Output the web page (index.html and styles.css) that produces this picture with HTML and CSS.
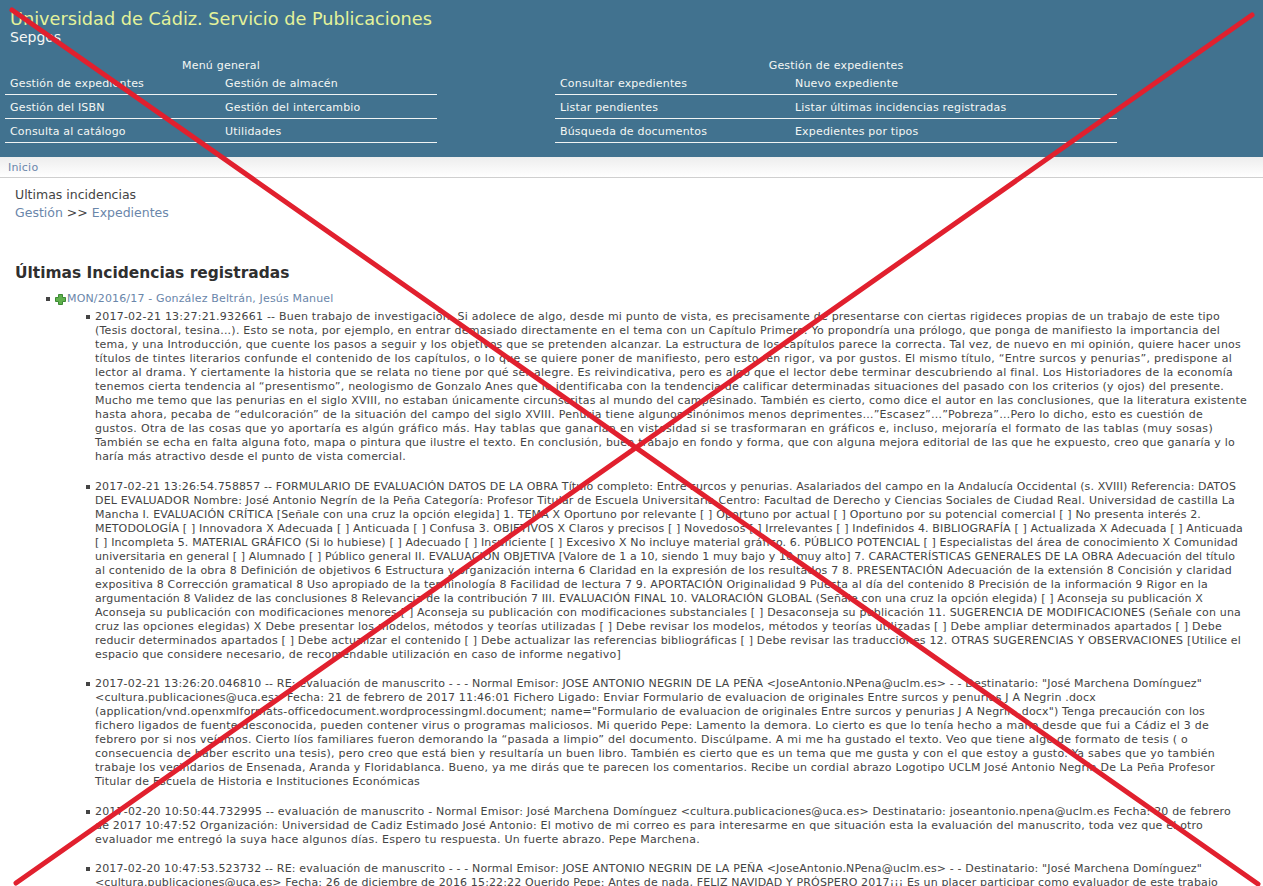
FILE: index.html
```html
<!DOCTYPE html>
<html lang="es">
<head>
<meta charset="utf-8">
<title>Sepgos</title>
<link rel="stylesheet" href="styles.css">
</head>
<body>
<header class="top">
  <div class="brand">
    <div class="brand-title">Universidad de Cádiz. Servicio de Publicaciones</div>
    <div class="brand-sub">Sepgos</div>
  </div>
  <nav class="menus">
    <section class="menu menu-general">
      <div class="menu-title">Menú general</div>
      <div class="menu-grid">
        <a>Gestión de expedientes</a><a>Gestión de almacén</a>
        <a>Gestión del ISBN</a><a>Gestión del intercambio</a>
        <a>Consulta al catálogo</a><a>Utilidades</a>
      </div>
    </section>
    <section class="menu menu-exp">
      <div class="menu-title">Gestión de expedientes</div>
      <div class="menu-grid">
        <a>Consultar expedientes</a><a>Nuevo expediente</a>
        <a>Listar pendientes</a><a>Listar últimas incidencias registradas</a>
        <a>Búsqueda de documentos</a><a>Expedientes por tipos</a>
      </div>
    </section>
  </nav>
</header>
<div class="crumb"><a class="link">Inicio</a></div>
<main class="content">
  <div class="page-name">Ultimas incidencias</div>
  <div class="path"><a class="link">Gestión</a> &gt;&gt; <a class="link">Expedientes</a></div>
  <h2 class="heading">Últimas Incidencias registradas</h2>
  <ul class="files">
    <li>
      <div class="file-line">
        <svg class="plus" viewBox="0 0 11 11" width="11" height="11"><path d="M3.5.5h4v3h3v4h-3v3h-4v-3h-3v-4h3z" fill="#5fb04c" stroke="#3d8a35"/></svg><a class="link">MON/2016/17 - González Beltrán, Jesús Manuel</a>
      </div>
      <ul class="events">
        <li>
          <span class="ln" data-end="1220">2017-02-21 13:27:21.932661 -- Buen trabajo de investigación. Si adolece de algo, desde mi punto de vista, es precisamente de presentarse con ciertas rigideces propias de un trabajo de este tipo</span>
          <span class="ln" data-end="1220">(Tesis doctoral, tesina...). Esto se nota, por ejemplo, en entrar demasiado directamente en el tema con un Capítulo Primero. Yo propondría una prólogo, que ponga de manifiesto la importancia del</span>
          <span class="ln" data-end="1241">tema, y una Introducción, que cuente los pasos a seguir y los objetivos que se pretenden alcanzar. La estructura de los capítulos parece la correcta. Tal vez, de nuevo en mi opinión, quiere hacer unos</span>
          <span class="ln" data-end="1232">títulos de tintes literarios confunde el contenido de los capítulos, o lo que se quiere poner de manifiesto, pero esto, en rigor, va por gustos. El mismo título, “Entre surcos y penurias”, predispone al</span>
          <span class="ln" data-end="1233">lector al drama. Y ciertamente la historia que se relata no tiene por qué ser alegre. Es reivindicativa, pero es algo que el lector debe terminar descubriendo al final. Los Historiadores de la economía</span>
          <span class="ln" data-end="1224">tenemos cierta tendencia al “presentismo”, neologismo de Gonzalo Anes que lo identificaba con la tendencia de calificar determinadas situaciones del pasado con los criterios (y ojos) del presente.</span>
          <span class="ln" data-end="1247">Mucho me temo que las penurias en el siglo XVIII, no estaban únicamente circunscritas al mundo del campesinado. También es cierto, como dice el autor en las conclusiones, que la literatura existente</span>
          <span class="ln" data-end="1203">hasta ahora, pecaba de “edulcoración” de la situación del campo del siglo XVIII. Penuria tiene algunos sinónimos menos deprimentes…”Escasez”…”Pobreza”…Pero lo dicho, esto es cuestión de</span>
          <span class="ln" data-end="1213">gustos. Otra de las cosas que yo aportaría es algún gráfico más. Hay tablas que ganarían en vistosidad si se trasformaran en gráficos e, incluso, mejoraría el formato de las tablas (muy sosas)</span>
          <span class="ln" data-end="1235">También se echa en falta alguna foto, mapa o pintura que ilustre el texto. En conclusión, buen trabajo en fondo y forma, que con alguna mejora editorial de las que he expuesto, creo que ganaría y lo</span>
          <span class="ln" data-end="406">haría más atractivo desde el punto de vista comercial.</span>
        </li>
        <li>
          <span class="ln" data-end="1236">2017-02-21 13:26:54.758857 -- FORMULARIO DE EVALUACIÓN DATOS DE LA OBRA Título completo: Entre surcos y penurias. Asalariados del campo en la Andalucía Occidental (s. XVIII) Referencia: DATOS</span>
          <span class="ln" data-end="1235">DEL EVALUADOR Nombre: José Antonio Negrín de la Peña Categoría: Profesor Titular de Escuela Universitaria Centro: Facultad de Derecho y Ciencias Sociales de Ciudad Real. Universidad de castilla La</span>
          <span class="ln" data-end="1201">Mancha I. EVALUACIÓN CRÍTICA [Señale con una cruz la opción elegida] 1. TEMA X Oportuno por relevante [ ] Oportuno por actual [ ] Oportuno por su potencial comercial [ ] No presenta interés 2.</span>
          <span class="ln" data-end="1243">METODOLOGÍA [ ] Innovadora X Adecuada [ ] Anticuada [ ] Confusa 3. OBJETIVOS X Claros y precisos [ ] Novedosos [ ] Irrelevantes [ ] Indefinidos 4. BIBLIOGRAFÍA [ ] Actualizada X Adecuada [ ] Anticuada</span>
          <span class="ln" data-end="1238">[ ] Incompleta 5. MATERIAL GRÁFICO (Si lo hubiese) [ ] Adecuado [ ] Insuficiente [ ] Excesivo X No incluye material gráfico. 6. PÚBLICO POTENCIAL [ ] Especialistas del área de conocimiento X Comunidad</span>
          <span class="ln" data-end="1235">universitaria en general [ ] Alumnado [ ] Público general II. EVALUACIÓN OBJETIVA [Valore de 1 a 10, siendo 1 muy bajo y 10 muy alto] 7. CARACTERÍSTICAS GENERALES DE LA OBRA Adecuación del título</span>
          <span class="ln" data-end="1232">al contenido de la obra 8 Definición de objetivos 6 Estructura y organización interna 6 Claridad en la expresión de los resultados 7 8. PRESENTACIÓN Adecuación de la extensión 8 Concisión y claridad</span>
          <span class="ln" data-end="1208">expositiva 8 Corrección gramatical 8 Uso apropiado de la terminología 8 Facilidad de lectura 7 9. APORTACIÓN Originalidad 9 Puesta al día del contenido 8 Precisión de la información 9 Rigor en la</span>
          <span class="ln" data-end="1203">argumentación 8 Validez de las conclusiones 8 Relevancia de la contribución 7 III. EVALUACIÓN FINAL 10. VALORACIÓN GLOBAL (Señale con una cruz la opción elegida) [ ] Aconseja su publicación X</span>
          <span class="ln" data-end="1241">Aconseja su publicación con modificaciones menores [ ] Aconseja su publicación con modificaciones substanciales [ ] Desaconseja su publicación 11. SUGERENCIA DE MODIFICACIONES (Señale con una</span>
          <span class="ln" data-end="1222">cruz las opciones elegidas) X Debe presentar los modelos, métodos y teorías utilizadas [ ] Debe revisar los modelos, métodos y teorías utilizadas [ ] Debe ampliar determinados apartados [ ] Debe</span>
          <span class="ln" data-end="1241">reducir determinados apartados [ ] Debe actualizar el contenido [ ] Debe actualizar las referencias bibliográficas [ ] Debe revisar las traducciones 12. OTRAS SUGERENCIAS Y OBSERVACIONES [Utilice el</span>
          <span class="ln" data-end="621">espacio que considere necesario, de recomendable utilización en caso de informe negativo]</span>
        </li>
        <li>
          <span class="ln" data-end="1202">2017-02-21 13:26:20.046810 -- RE: evaluación de manuscrito - - - Normal Emisor: JOSE ANTONIO NEGRIN DE LA PEÑA &lt;JoseAntonio.NPena@uclm.es&gt; - - Destinatario: "José Marchena Domínguez"</span>
          <span class="ln" data-end="1096">&lt;cultura.publicaciones@uca.es&gt; Fecha: 21 de febrero de 2017 11:46:01 Fichero Ligado: Enviar Formulario de evaluacion de originales Entre surcos y penurias J A Negrin .docx</span>
          <span class="ln" data-end="1205">(application/vnd.openxmlformats-officedocument.wordprocessingml.document; name="Formulario de evaluacion de originales Entre surcos y penurias J A Negrin .docx") Tenga precaución con los</span>
          <span class="ln" data-end="1209">fichero ligados de fuente desconocida, pueden contener virus o programas maliciosos. Mi querido Pepe: Lamento la demora. Lo cierto es que lo tenía hecho a mano desde que fui a Cádiz el 3 de</span>
          <span class="ln" data-end="1188">febrero por si nos veíamos. Cierto líos familiares fueron demorando la “pasada a limpio” del documento. Discúlpame. A mi me ha gustado el texto. Veo que tiene algo de formato de tesis ( o</span>
          <span class="ln" data-end="1215">consecuencia de haber escrito una tesis), pero creo que está bien y resultaría un buen libro. También es cierto que es un tema que me gusta y con el que estoy a gusto. Ya sabes que yo también</span>
          <span class="ln" data-end="1215">trabaje los vecindarios de Ensenada, Aranda y Floridablanca. Bueno, ya me dirás que te parecen los comentarios. Recibe un cordial abrazo Logotipo UCLM José Antonio Negrín De La Peña Profesor</span>
          <span class="ln" data-end="420">Titular de Escuela de Historia e Instituciones Económicas</span>
        </li>
        <li>
          <span class="ln" data-end="1231">2017-02-20 10:50:44.732995 -- evaluación de manuscrito - Normal Emisor: José Marchena Domínguez &lt;cultura.publicaciones@uca.es&gt; Destinatario: joseantonio.npena@uclm.es Fecha: 20 de febrero</span>
          <span class="ln" data-end="1203">de 2017 10:47:52 Organización: Universidad de Cadiz Estimado José Antonio: El motivo de mi correo es para interesarme en que situación esta la evaluación del manuscrito, toda vez que el otro</span>
          <span class="ln" data-end="700">evaluador me entregó la suya hace algunos días. Espero tu respuesta. Un fuerte abrazo. Pepe Marchena.</span>
        </li>
        <li>
          <span class="ln" data-end="1202">2017-02-20 10:47:53.523732 -- RE: evaluación de manuscrito - - - Normal Emisor: JOSE ANTONIO NEGRIN DE LA PEÑA &lt;JoseAntonio.NPena@uclm.es&gt; - - Destinatario: "José Marchena Domínguez"</span>
          <span class="ln" data-end="1218">&lt;cultura.publicaciones@uca.es&gt; Fecha: 26 de diciembre de 2016 15:22:22 Querido Pepe: Antes de nada, FELIZ NAVIDAD Y PRÓSPERO 2017¡¡¡ Es un placer participar como evaluador de este trabajo</span>
        </li>
      </ul>
    </li>
  </ul>
</main>
<svg class="cross" viewBox="0 0 1263 886" width="1263" height="886">
  <path d="M12 10L1258 884M1252 15L16 883" fill="none" stroke="#e1202e" stroke-width="5" stroke-linecap="round"/>
</svg>
<script src="lines.js"></script>
</body>
</html>
```
FILE: styles.css
```css
html, body {
  margin: 0;
  padding: 0;
}
html {
  height: 886px;
  overflow: hidden;
}
body {
  position: relative;
  height: 886px;
  overflow: hidden;
  background: #fff;
  color: #444;
  font-family: "DejaVu Sans", Verdana, sans-serif;
  font-size: 11px;
  line-height: 14px;
  letter-spacing: 0.2px;
}
.top {
  height: 157px;
  box-sizing: border-box;
  padding: 9px 0 0 5px;
  background: #41728f;
  color: #f4f7f4;
}
.brand {
  padding-left: 5px;
}
.brand-title {
  color: #e4f29a;
  font-size: 17.7px;
  line-height: 20px;
  letter-spacing: 0;
}
.brand-sub {
  font-size: 14px;
  line-height: 16px;
  letter-spacing: 0;
}
.menus {
  display: flex;
  gap: 118px;
  margin-top: 14px;
}
.menu-title {
  text-align: center;
  line-height: 14px;
}
.menu-general {
  width: 432px;
}
.menu-exp {
  width: 562px;
}
.menu-grid {
  display: grid;
  margin-top: -2px;
  letter-spacing: 0.17px;
}
.menu-general .menu-grid {
  grid-template-columns: 215px 217px;
}
.menu-exp .menu-grid {
  grid-template-columns: 235px 327px;
}
.menu-grid a {
  height: 24px;
  box-sizing: border-box;
  padding: 6px 0 0 5px;
  line-height: 14px;
  border-bottom: 1px solid #f0f4f4;
}
.crumb {
  height: 21px;
  box-sizing: border-box;
  padding: 4px 0 0 8px;
  background: linear-gradient(#ededed, #fff);
  border-bottom: 1px solid #cfcfcf;
  line-height: 14px;
}
.link {
  color: #6a86aa;
}
.content {
  padding: 8px 0 0 15px;
}
.page-name,
.path {
  font-size: 12.5px;
  line-height: 18px;
  letter-spacing: 0;
}
.heading {
  margin: 40px 0 0;
  color: #2f2f2f;
  font-size: 15.45px;
  line-height: 22px;
  letter-spacing: 0;
}
.files,
.events {
  list-style: none;
  padding: 0 0 0 40px;
}
.files {
  margin: 8px 0 0;
}
.files li {
  position: relative;
}
.files li::before {
  content: "";
  position: absolute;
  left: -9px;
  top: 5px;
  width: 4px;
  height: 4px;
  background: #444;
}
.file-line {
  display: flex;
  align-items: center;
  gap: 1px;
  height: 14px;
  letter-spacing: 0.16px;
}
.plus {
  flex: none;
}
.events {
  margin: 4px 0 0;
  width: 1155px;
}
.events li {
  margin-bottom: 15.6px;
}
.ln {
  display: block;
  width: max-content;
  white-space: nowrap;
}
.cross {
  position: absolute;
  left: 0;
  top: 0;
  pointer-events: none;
}
```
FILE: lines.js
```js
// Fit each text line so that it ends at the x position recorded in data-end.
document.querySelectorAll('.ln').forEach(function (line) {
  line.style.letterSpacing = '0';
  var box = line.getBoundingClientRect();
  var extra = Number(line.dataset.end) - box.right;
  line.style.letterSpacing = (extra / line.textContent.length) + 'px';
});
```
